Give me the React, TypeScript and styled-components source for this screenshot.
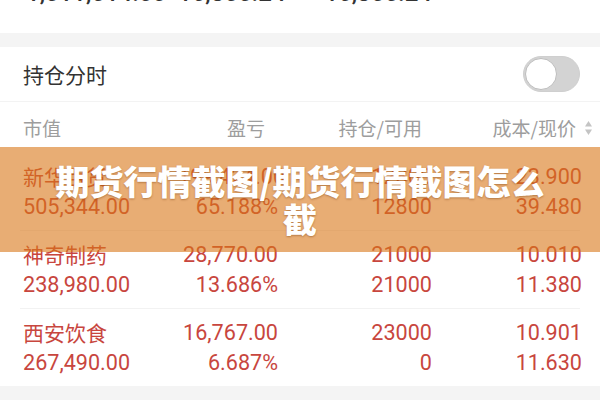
import React, { useState } from 'react'
import styled, { createGlobalStyle } from 'styled-components'

const GlobalStyle = createGlobalStyle`
  html, body {
    margin: 0;
    padding: 0;
    background: #f4f4f4;
  }
  body {
    font-family: Roboto, "Noto Sans CJK SC", sans-serif;
    width: 600px;
    height: 400px;
    overflow: hidden;
  }
`

const Page = styled.div`
  position: relative;
  width: 600px;
  height: 400px;
  overflow: hidden;
  background: #f4f4f4;
`

const Summary = styled.div`
  height: 33px;
  background: #fff;
  overflow: hidden;
`

// shared four column grid: name/value, pnl, holding, cost/price
const Columns = styled.div`
  display: grid;
  grid-template-columns: 1fr 100px 154px 150px;
  padding: 0 18px 0 23px;
`

const SummaryRow = styled(Columns)`
  padding-left: 26px;
  margin-top: -20px;
  font-size: 24px;
  line-height: 26px;
  color: #333;
  font-weight: 500;
`

const Cell = styled.div<{ $align?: 'left' | 'right' }>`
  text-align: ${({ $align }) => $align || 'right'};
  white-space: nowrap;
`

const Card = styled.div`
  margin-top: 14px;
  background: #fff;
`

const CardHead = styled.div`
  display: flex;
  align-items: center;
  justify-content: space-between;
  height: 54px;
  padding: 0 20px 0 23px;
  border-bottom: 1px solid #f3f3f3;
`

const CardTitle = styled.div`
  font-family: "Noto Sans CJK SC", sans-serif;
  font-size: 21px;
  color: #333;
`

const Track = styled.button<{ $on: boolean }>`
  position: relative;
  width: 57px;
  height: 36px;
  padding: 0;
  border: 1px solid #cfcfcf;
  border-radius: 18px;
  background: ${({ $on }) => ($on ? '#e94a3f' : '#d3d3d3')};
  cursor: pointer;
`

const Knob = styled.span<{ $on: boolean }>`
  position: absolute;
  top: 1px;
  left: ${({ $on }) => ($on ? '22px' : '1px')};
  width: 30px;
  height: 30px;
  border-radius: 50%;
  background: #fff;
  border: 1px solid #bdbdbd;
`

const HeadRow = styled(Columns)`
  height: 51px;
  align-items: center;
  font-family: "Noto Sans CJK SC", sans-serif;
  font-size: 19px;
  color: #9d9d9d;
`

const HeadCell = styled.div<{ $align?: 'left' | 'right'; $inset?: number }>`
  display: flex;
  align-items: center;
  justify-content: ${({ $align }) => ($align === 'left' ? 'flex-start' : 'flex-end')};
  gap: 8px;
  margin-right: ${({ $inset }) => $inset || 0}px;
  white-space: nowrap;
`

const Row = styled.div<{ $last?: boolean }>`
  margin: 0 20px;
  padding: 8px 0 9px;
  border-bottom: ${({ $last }) => ($last ? 'none' : '1px solid #f2f2f2')};
`

const Line = styled(Columns)`
  padding: 0 0 0 3px;
  margin-right: -2px;
  height: 30px;
  align-items: center;
  font-size: 21.6px;
  color: #c8463e;
`

const Name = styled(Cell)`
  font-family: "Noto Sans CJK SC", sans-serif;
  font-size: 21px;
`

const Caption = styled.div`
  position: absolute;
  left: 0;
  right: 0;
  top: 147px;
  height: 105px;
  display: flex;
  align-items: center;
  justify-content: center;
  background: rgba(217, 118, 23, 0.6);
`

const CaptionText = styled.div`
  width: 510px;
  text-align: center;
  font-family: "Noto Sans CJK SC", sans-serif;
  font-weight: 900;
  font-size: 34px;
  line-height: 38px;
  color: #fff;
  text-shadow: 0 1px 2px rgba(120, 60, 10, 0.45);
`

const SortIcon = () => (
  <svg width="9" height="16" viewBox="0 0 9 16">
    <path d="M4.5 1 L8 6.5 H1 Z" fill="#c4c4c4" />
    <path d="M4.5 15 L8 9.5 H1 Z" fill="#c4c4c4" />
  </svg>
)

const positions = [
  { name: '新华百货', pnl: '199,424.00', hold: '12800', cost: '23.900', value: '505,344.00', pct: '65.188%', avail: '12800', price: '39.480' },
  { name: '神奇制药', pnl: '28,770.00', hold: '21000', cost: '10.010', value: '238,980.00', pct: '13.686%', avail: '21000', price: '11.380' },
  { name: '西安饮食', pnl: '16,767.00', hold: '23000', cost: '10.901', value: '267,490.00', pct: '6.687%', avail: '0', price: '11.630' },
]

export default function App() {
  const [live, setLive] = useState(false)

  return (
    <Page>
      <GlobalStyle />
      <Summary>
        <SummaryRow>
          <Cell $align="left">1,511,514.00</Cell>
          <Cell>16,855.24</Cell>
          <Cell>16,855.24</Cell>
          <Cell />
        </SummaryRow>
      </Summary>

      <Card>
        <CardHead>
          <CardTitle>持仓分时</CardTitle>
          <Track $on={live} onClick={() => setLive(!live)} aria-label="toggle">
            <Knob $on={live} />
          </Track>
        </CardHead>

        <HeadRow>
          <HeadCell $align="left">市值</HeadCell>
          <HeadCell $inset={13}>盈亏</HeadCell>
          <HeadCell $inset={10}>持仓/可用</HeadCell>
          <HeadCell $inset={-11}>
            成本/现价
            <SortIcon />
          </HeadCell>
        </HeadRow>

        {positions.map((p, i) => (
          <Row key={p.name} $last={i === positions.length - 1}>
            <Line>
              <Name $align="left">{p.name}</Name>
              <Cell>{p.pnl}</Cell>
              <Cell>{p.hold}</Cell>
              <Cell>{p.cost}</Cell>
            </Line>
            <Line>
              <Cell $align="left">{p.value}</Cell>
              <Cell>{p.pct}</Cell>
              <Cell>{p.avail}</Cell>
              <Cell>{p.price}</Cell>
            </Line>
          </Row>
        ))}
      </Card>

      <Caption>
        <CaptionText>期货行情截图/期货行情截图怎么截</CaptionText>
      </Caption>
    </Page>
  )
}
